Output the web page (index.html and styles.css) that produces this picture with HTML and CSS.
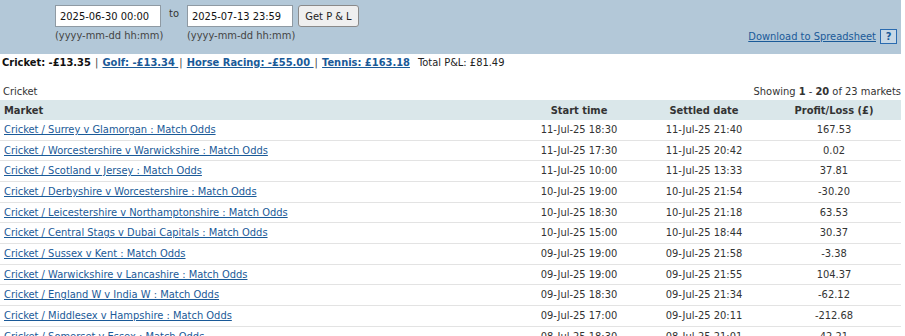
FILE: index.html
```html
<!DOCTYPE html>
<html lang="en">
<head>
<meta charset="utf-8">
<title>Profit and Loss</title>
<link rel="stylesheet" href="styles.css">
</head>
<body>
<div class="page">
  <div class="filterbar">
    <div class="dates">
      <div class="field">
        <input class="dateinput" type="text" value="2025-06-30 00:00">
        <span class="hint">(yyyy-mm-dd hh:mm)</span>
      </div>
      <span class="to">to</span>
      <div class="field">
        <input class="dateinput" type="text" value="2025-07-13 23:59">
        <span class="hint">(yyyy-mm-dd hh:mm)</span>
      </div>
      <button class="getbtn" type="button">Get P &amp; L</button>
    </div>
    <div class="download">
      <a href="#" class="link">Download to Spreadsheet</a>
      <span class="help">?</span>
    </div>
  </div>

  <div class="summary">
    <b class="current">Cricket: -£13.35</b>
    <span class="sep">|</span>
    <a href="#" class="slink">Golf: -£13.34 </a>
    <span class="sep">|</span>
    <a href="#" class="slink">Horse Racing: -£55.00 </a>
    <span class="sep">|</span>
    <a href="#" class="slink">Tennis: £163.18</a>
    <span class="total">Total P&amp;L: £81.49</span>
  </div>

  <div class="listhead">
    <span>Cricket</span>
    <span>Showing <b>1</b> - <b>20</b> of 23 markets</span>
  </div>

  <table class="markets">
    <colgroup>
      <col class="c-market">
      <col class="c-start">
      <col class="c-settled">
      <col class="c-pl">
    </colgroup>
    <thead>
      <tr><th class="left">Market</th><th>Start time</th><th>Settled date</th><th>Profit/Loss (£)</th></tr>
    </thead>
    <tbody>
      <tr><td class="left"><a href="#" class="link">Cricket / Surrey v Glamorgan : Match Odds</a></td><td>11-Jul-25 18:30</td><td>11-Jul-25 21:40</td><td>167.53</td></tr>
      <tr><td class="left"><a href="#" class="link">Cricket / Worcestershire v Warwickshire : Match Odds</a></td><td>11-Jul-25 17:30</td><td>11-Jul-25 20:42</td><td>0.02</td></tr>
      <tr><td class="left"><a href="#" class="link">Cricket / Scotland v Jersey : Match Odds</a></td><td>11-Jul-25 10:00</td><td>11-Jul-25 13:33</td><td>37.81</td></tr>
      <tr><td class="left"><a href="#" class="link">Cricket / Derbyshire v Worcestershire : Match Odds</a></td><td>10-Jul-25 19:00</td><td>10-Jul-25 21:54</td><td>-30.20</td></tr>
      <tr><td class="left"><a href="#" class="link">Cricket / Leicestershire v Northamptonshire : Match Odds</a></td><td>10-Jul-25 18:30</td><td>10-Jul-25 21:18</td><td>63.53</td></tr>
      <tr><td class="left"><a href="#" class="link">Cricket / Central Stags v Dubai Capitals : Match Odds</a></td><td>10-Jul-25 15:00</td><td>10-Jul-25 18:44</td><td>30.37</td></tr>
      <tr><td class="left"><a href="#" class="link">Cricket / Sussex v Kent : Match Odds</a></td><td>09-Jul-25 19:00</td><td>09-Jul-25 21:58</td><td>-3.38</td></tr>
      <tr><td class="left"><a href="#" class="link">Cricket / Warwickshire v Lancashire : Match Odds</a></td><td>09-Jul-25 19:00</td><td>09-Jul-25 21:55</td><td>104.37</td></tr>
      <tr><td class="left"><a href="#" class="link">Cricket / England W v India W : Match Odds</a></td><td>09-Jul-25 18:30</td><td>09-Jul-25 21:34</td><td>-62.12</td></tr>
      <tr><td class="left"><a href="#" class="link">Cricket / Middlesex v Hampshire : Match Odds</a></td><td>09-Jul-25 17:00</td><td>09-Jul-25 20:11</td><td>-212.68</td></tr>
      <tr><td class="left"><a href="#" class="link">Cricket / Somerset v Essex : Match Odds</a></td><td>08-Jul-25 18:30</td><td>08-Jul-25 21:01</td><td>42.21</td></tr>
    </tbody>
  </table>
</div>
</body>
</html>
```

FILE: styles.css
```css
html, body {
  margin: 0;
  padding: 0;
  background: #ffffff;
}

body {
  font-family: "DejaVu Sans Condensed", "DejaVu Sans", Tahoma, sans-serif;
  font-size: 11px;
  color: #222;
}

.page {
  width: 901px;
}

.filterbar {
  background: #b3c8d8;
  height: 54px;
  box-sizing: border-box;
  padding: 5px 0 0 55px;
  display: flex;
  justify-content: space-between;
}

.dates {
  display: flex;
  align-items: flex-start;
}

.field {
  display: flex;
  flex-direction: column;
  width: 106px;
}

.dateinput {
  width: 106px;
  height: 22px;
  box-sizing: border-box;
  margin: 0;
  border: 1px solid #8f9aa3;
  border-radius: 0;
  padding: 0 4px;
  font: 11px "DejaVu Sans Condensed", "DejaVu Sans", sans-serif;
  color: #111;
  background: #fff;
}

.hint {
  color: #444;
  font-size: 11px;
  line-height: 14px;
  margin-top: 2px;
  white-space: nowrap;
}

.to {
  color: #333;
  font-size: 11px;
  width: 26px;
  text-align: center;
  line-height: 14px;
  margin-top: 2px;
}

.getbtn {
  margin: 0 0 0 5px;
  height: 22px;
  width: 61px;
  padding: 0;
  border: 1px solid #8a8a8a;
  border-radius: 3px;
  background: #efefef;
  color: #222;
  font: 11px "DejaVu Sans Condensed", "DejaVu Sans", sans-serif;
}

.download {
  align-self: flex-start;
  margin-top: 24px;
  display: flex;
  align-items: center;
  gap: 4px;
  margin-right: 4px;
}

.link {
  color: #1a5a98;
  text-decoration: underline;
}

.help {
  display: inline-block;
  width: 17px;
  height: 15px;
  box-sizing: border-box;
  border: 1px solid #2a6bb0;
  color: #1a5a98;
  background: #c7d8e6;
  font-weight: bold;
  font-size: 11px;
  line-height: 13px;
  text-align: center;
}

.summary {
  font-size: 11px;
  line-height: 14px;
  padding: 2px 0 0 2px;
  height: 16px;
  color: #222;
}

.current {
  color: #111;
}

.sep {
  color: #444;
  margin: 0 1px;
}

.slink {
  color: #1a5a98;
  font-weight: bold;
  text-decoration: underline;
}

.total {
  margin-left: 5px;
}

.listhead {
  display: flex;
  justify-content: space-between;
  padding: 13px 0 0 3px;
  line-height: 14px;
  height: 14px;
  color: #333;
}

.markets {
  width: 901px;
  border-collapse: collapse;
  table-layout: fixed;
  margin-top: 1px;
}

.c-market { width: 517px; }
.c-start { width: 124px; }
.c-settled { width: 126px; }
.c-pl { width: 134px; }

.markets th {
  background: #dae7ea;
  font-weight: bold;
  font-size: 11px;
  color: #333;
  height: 20px;
  padding: 0 4px;
  text-align: center;
}

.markets td {
  line-height: 13.67px;
  padding: 3px 4px;
  border-bottom: 1px solid #e3e3e3;
  text-align: center;
  color: #333;
  white-space: nowrap;
}

.markets .left {
  text-align: left;
}
```
